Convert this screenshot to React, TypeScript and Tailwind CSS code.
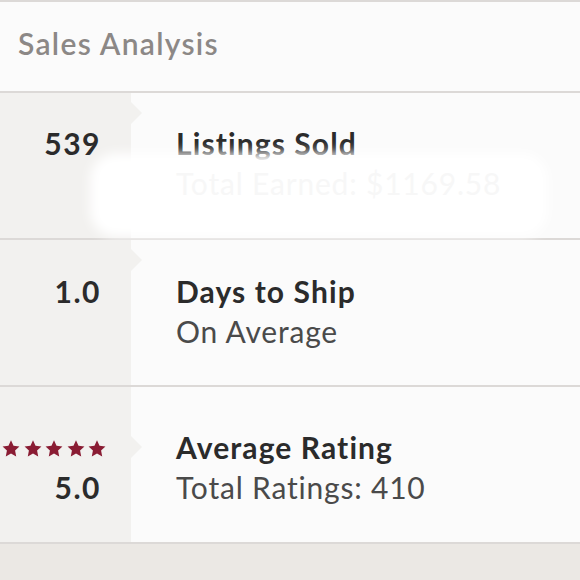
const font = { fontFamily: "Lato, 'Open Sans', sans-serif" };

function StarIcon() {
  return (
    <svg width="18" height="17" viewBox="0 0 24 23" className="fill-[#8a1c33]">
      <polygon points="12,0.5 15.41,7.81 23.41,8.79 17.52,14.29 19.05,22.21 12,18.3 4.95,22.21 6.48,14.29 0.59,8.79 8.59,7.81" />
    </svg>
  );
}

function Stars() {
  return (
    <div className="flex h-[40px] items-center justify-end gap-[3.5px] pr-[25px] pt-[2px]">
      {[0, 1, 2, 3, 4].map((i) => (
        <StarIcon key={i} />
      ))}
    </div>
  );
}

function Row({
  value,
  title,
  sub,
  stars,
  pad,
  height,
  subClass = "text-[#4a4a4a]",
  children,
}: {
  value: string;
  title: string;
  sub: string;
  stars?: boolean;
  pad: string;
  height: string;
  subClass?: string;
  children?: React.ReactNode;
}) {
  return (
    <div className={`relative flex ${height} border-b-2 border-[#dcd9d7]`}>
      {/* left number column */}
      <div className={`relative w-[131px] shrink-0 bg-[#f2f1ef] ${pad}`}>
        {stars && <Stars />}
        <div className="pr-[30px] text-right text-[30px] font-bold leading-[40px] tracking-[1.5px] text-[#2b2b2b]">
          {value}
        </div>
        {/* pointer */}
        <div
          className={`absolute -right-[11px] h-0 w-0 border-y-[11px] border-l-[11px] border-y-transparent border-l-[#f2f1ef] ${
            stars ? "top-[49px]" : "top-[9px]"
          }`}
        />
      </div>
      <div className={`flex-1 bg-[#fbfbfb] pl-[45px] ${pad}`}>
        <div className="text-[30px] font-bold leading-[40px] tracking-[1.1px] text-[#2b2b2b]">{title}</div>
        <div className={`text-[30px] leading-[40px] tracking-[0.8px] ${subClass}`}>{sub}</div>
      </div>
      {children}
    </div>
  );
}

export default function App() {
  return (
    <div className="h-[580px] w-[580px] overflow-hidden bg-[#ebe8e4]" style={font}>
      {/* Header */}
      <div className="h-[93px] border-y-2 border-[#dcd9d7] bg-[#fbfbfb] pl-[18px] pt-[21px]">
        <div className="text-[30px] font-semibold leading-[40px] tracking-[1.3px] text-[#8c8886]">Sales Analysis</div>
      </div>

      <Row
        value="539"
        title="Listings Sold"
        sub="Total Earned: $1169.58"
        pad="pt-[30px]"
        height="h-[147px]"
        subClass="relative z-10 text-[#f7f7f7]"
      >
        {/* whited-out area */}
        <div className="absolute left-[90px] top-[60px] h-[84px] w-[458px] rounded-[26px] bg-white blur-[6px]" />
      </Row>

      <Row value="1.0" title="Days to Ship" sub="On Average" pad="pt-[31px]" height="h-[147px]" />

      <Row
        value="5.0"
        title="Average Rating"
        sub="Total Ratings: 410"
        stars
        pad="pt-[40px]"
        height="h-[157px]"
      />
    </div>
  );
}
